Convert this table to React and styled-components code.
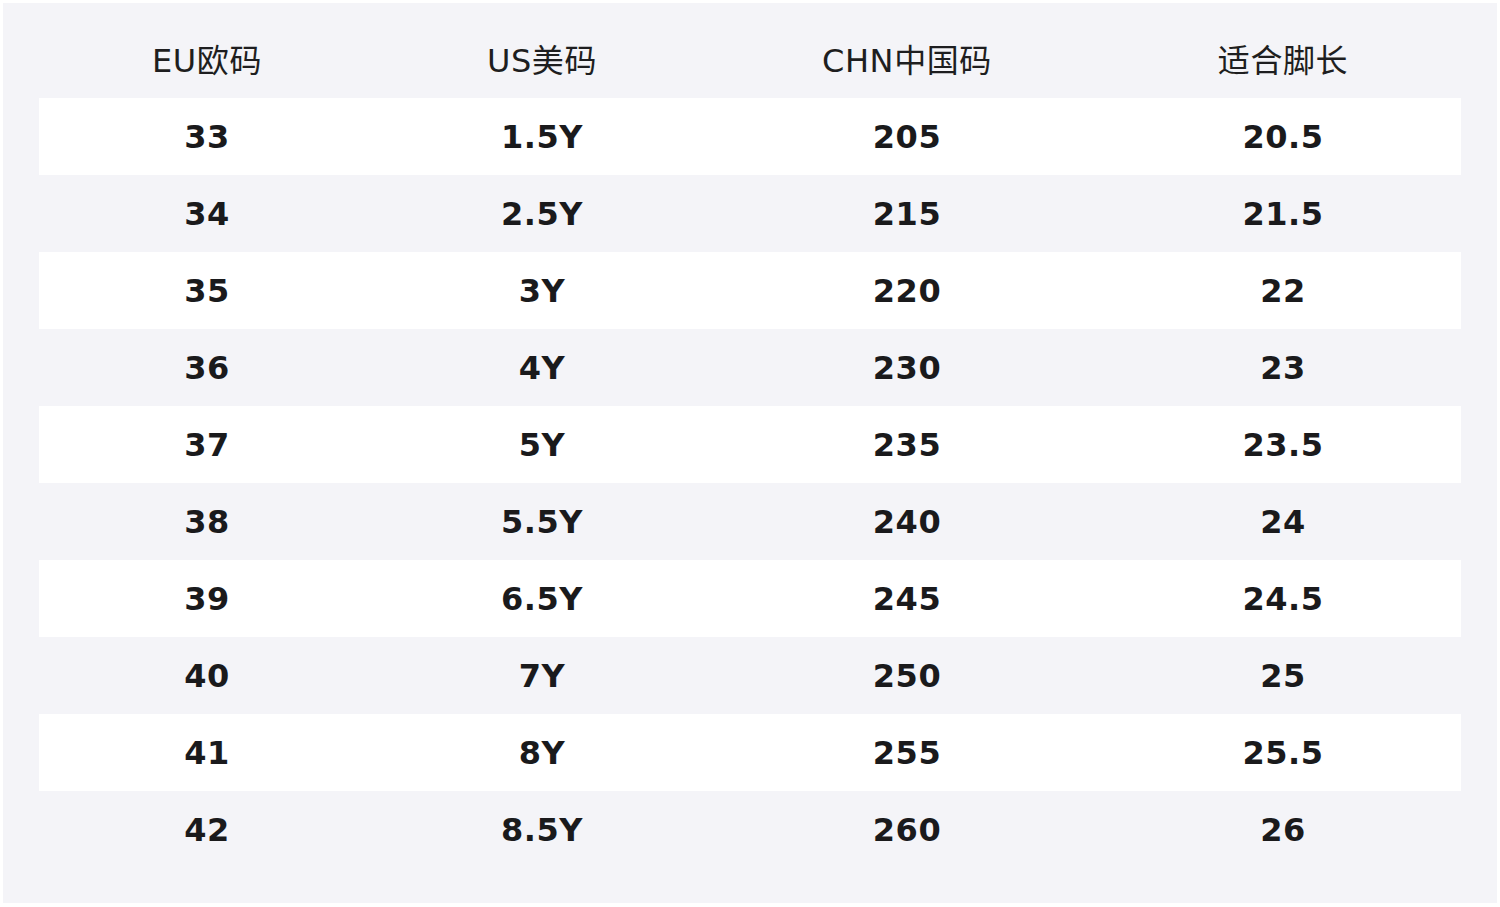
import React from "react";
import styled, { createGlobalStyle } from "styled-components";

const GlobalStyle = createGlobalStyle`
  html, body { margin: 0; padding: 0; background: #ffffff; }
  body { font-family: "DejaVu Sans", "Noto Sans CJK SC", sans-serif; }
`;

const Panel = styled.div`
  margin: 3px;
  width: 1494px;
  height: 900px;
  box-sizing: border-box;
  background: #f4f4f8;
  padding: 0 36px;
  display: flex;
  flex-direction: column;
`;

const cols = "336px 334px 396px 356px";

const HeaderRow = styled.div`
  display: grid;
  grid-template-columns: ${cols};
  height: 95px;
  align-items: end;
  padding-bottom: 18px;
  box-sizing: border-box;
`;

const HeaderCell = styled.div`
  text-align: center;
  font-size: 32px;
  line-height: 38px;
  font-weight: 400;
  color: #1e1e20;
  letter-spacing: 0.6px;
`;

const Row = styled.div`
  display: grid;
  grid-template-columns: ${cols};
  height: 77px;
  align-items: center;
  background: ${(p) => (p.$striped ? "#ffffff" : "#f4f4f8")};
`;

const Cell = styled.div`
  text-align: center;
  font-size: 32px;
  line-height: 38px;
  font-weight: 700;
  color: #1a1a1c;
  letter-spacing: 0.5px;
`;

const headers = ["EU欧码", "US美码", "CHN中国码", "适合脚长"];
const data = [
  ["33", "1.5Y", "205", "20.5"],
  ["34", "2.5Y", "215", "21.5"],
  ["35", "3Y", "220", "22"],
  ["36", "4Y", "230", "23"],
  ["37", "5Y", "235", "23.5"],
  ["38", "5.5Y", "240", "24"],
  ["39", "6.5Y", "245", "24.5"],
  ["40", "7Y", "250", "25"],
  ["41", "8Y", "255", "25.5"],
  ["42", "8.5Y", "260", "26"],
];

export default function App() {
  return (
    <>
      <GlobalStyle />
      <Panel>
        <HeaderRow>
          {headers.map((h) => (
            <HeaderCell key={h}>{h}</HeaderCell>
          ))}
        </HeaderRow>
        {data.map((r, i) => (
          <Row key={r[0]} $striped={i % 2 === 0}>
            {r.map((c, j) => (
              <Cell key={j}>{c}</Cell>
            ))}
          </Row>
        ))}
      </Panel>
    </>
  );
}
